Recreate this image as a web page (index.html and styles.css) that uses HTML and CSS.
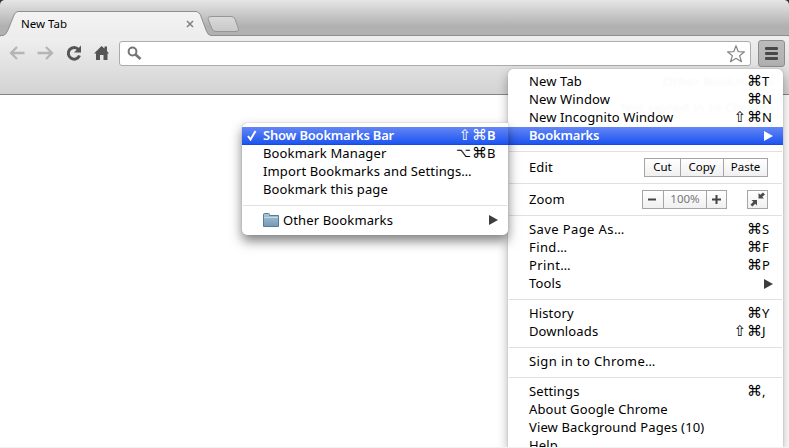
FILE: index.html
```html
<!DOCTYPE html>
<html lang="en">
<head>
<meta charset="utf-8">
<title>New Tab</title>
<link rel="stylesheet" href="styles.css">
</head>
<body>
<div class="window">
  <header class="chrome">
    <div class="tabstrip">
      <svg class="tabshape" width="789" height="38" viewBox="0 0 789 38">
        <defs><linearGradient id="tab" x1="0" y1="0" x2="0" y2="1"><stop offset="0" stop-color="#f3f3f3"/><stop offset="1" stop-color="#ededed"/></linearGradient>
        <linearGradient id="add" x1="0" y1="0" x2="0" y2="1"><stop offset="0" stop-color="#dadada"/><stop offset="1" stop-color="#c8c8c8"/></linearGradient></defs>
        <path d="M0 0h4Q0 1 0 5zM789 0h-4q4 1 4 5z" fill="#333"/>
        <path d="M0 36.5V35.500H3Q6 35 8 30L14 15Q15.500 11.500 18 11.500H196Q199 11.500 200.500 15L206 30Q208 35.500 211 35.500H789V38H0z" fill="url(#tab)" stroke="#8e8e8e"/>
        <path d="M0 36.500h789V38H0z" fill="#ededed"/>
        <path d="M211 16.500H231Q234 16.500 235 19L238.500 29Q239 31.500 236 31.500H216Q213 31.500 212 29L208 19Q207.500 16.500 211 16.500z" fill="url(#add)" stroke="#969696"/>
      </svg>
      <span class="title">New Tab</span>
      <svg class="close" width="8" height="8" viewBox="0 0 8 8"><path d="M1 1l6 6M7 1L1 7" stroke="#818181" stroke-width="1.500"/></svg>
    </div>
    <div class="toolbar">
      <svg class="nav" width="112" height="20" viewBox="0 0 112 20">
        <g fill="none" stroke="#b5b5b5" stroke-width="2.300"><path d="M24.500 10H11.500M17 4l-6 6 6 6"/><path d="M37.500 10H51M46 4l6 6-6 6"/></g>
        <path d="M78.500 6.500A5.800 5.800 0 1 0 79.500 12.500" fill="none" stroke="#555" stroke-width="3"/><path d="M81 2.500v7h-7z" fill="#555"/>
        <path d="M101.500 3L94 10.500h2V17h4v-5h3.500v5h4v-6.500h1.500L107 8V3.500h-2.500v2z" fill="#555"/>
      </svg>
      <div class="omnibox">
        <svg width="15" height="15" viewBox="0 0 15 15"><circle cx="5.500" cy="5.500" r="3.900" fill="none" stroke="#757575" stroke-width="2"/><path d="M8.500 8.500l5 4.500" stroke="#757575" stroke-width="2.600"/></svg>
        <svg width="20" height="20" viewBox="0 0 20 20"><path d="M10 1.700l2.300 6 6.200.1-4.900 4 1.900 6L10 14.300l-5.500 3.500 1.900-6-4.900-4 6.200-.1z" fill="#fff" stroke="#858585" stroke-width="1.200" stroke-linejoin="round"/></svg>
      </div>
      <div class="menubutton"><i></i><i></i><i></i></div>
    </div>
  </header>
  <main class="page"></main>
</div>

<nav class="menu main">
  <div class="ghost"><p>Other Bookmarks</p><p>Not signed in to Chrome</p></div>
  <div class="row"><span>New Tab</span><kbd><b>⌘</b><em>T</em></kbd></div>
  <div class="row"><span>New Window</span><kbd><b>⌘</b><em>N</em></kbd></div>
  <div class="row"><span>New Incognito Window</span><kbd><b>⇧</b><b>⌘</b><em>N</em></kbd></div>
  <div class="row selected"><span>Bookmarks</span><svg class="arrow" width="9" height="10"><path d="M0 0v10L9 5z"/></svg></div>
  <hr>
  <div class="row tall"><span>Edit</span><div class="group edit"><button>Cut</button><button>Copy</button><button>Paste</button></div></div>
  <hr>
  <div class="row tall"><span>Zoom</span>
    <div class="group zoom"><button><svg width="9" height="9"><path d="M0 4.500h8" stroke="#444" stroke-width="2"/></svg></button><button class="level">100%</button><button><svg width="9" height="9"><path d="M0 4.500h9M4.500 0v9" stroke="#444" stroke-width="2"/></svg></button></div>
    <div class="group full"><button><svg width="15" height="15" viewBox="0 0 15 15"><path d="M1.500 8H7v5.500L5.300 11.800 2.300 14.500.5 12.700l2.800-3zM8.500 1v5.500H14l-1.700-1.700L15 2.500 13 .4l-2.700 2.400z" fill="#4c4c4c"/></svg></button></div>
  </div>
  <hr>
  <div class="row"><span class="dots">Save Page As…</span><kbd><b>⌘</b><em>S</em></kbd></div>
  <div class="row"><span class="dots">Find…</span><kbd><b>⌘</b><em>F</em></kbd></div>
  <div class="row"><span class="dots">Print…</span><kbd><b>⌘</b><em>P</em></kbd></div>
  <div class="row"><span>Tools</span><svg class="arrow" width="9" height="10"><path d="M0 0v10L9 5z"/></svg></div>
  <hr>
  <div class="row"><span>History</span><kbd><b>⌘</b><em>Y</em></kbd></div>
  <div class="row"><span>Downloads</span><kbd><b>⇧</b><b>⌘</b><em>J</em></kbd></div>
  <hr>
  <div class="row"><span class="dots">Sign in to Chrome…</span></div>
  <hr>
  <div class="row"><span>Settings</span><kbd><b>⌘</b><em>,</em></kbd></div>
  <div class="row"><span>About Google Chrome</span></div>
  <div class="row"><span>View Background Pages (10)</span></div>
  <div class="row"><span>Help</span></div>
</nav>

<nav class="menu sub">
  <div class="row selected"><svg class="check" width="10" height="11" viewBox="0 0 10 11"><path d="M1 6l2.500 3.500L8.500 1" fill="none" stroke="#fff" stroke-width="2"/></svg><span>Show Bookmarks Bar</span><kbd><b>⇧</b><b>⌘</b><em>B</em></kbd></div>
  <div class="row"><span>Bookmark Manager</span><kbd><b class="option">⌥</b><b>⌘</b><em>B</em></kbd></div>
  <div class="row"><span>Import Bookmarks and Settings…</span></div>
  <div class="row"><span>Bookmark this page</span></div>
  <hr>
  <div class="row other"><svg class="folder" width="16" height="14" viewBox="0 0 16 14"><defs><linearGradient id="fold" x1="0" y1="0" x2="0" y2="1"><stop offset="0" stop-color="#a9c5d9"/><stop offset="1" stop-color="#7599b5"/></linearGradient></defs><path d="M.5 13.500V1.500q0-1 1-1h4q1 0 1 1V2.500h9v11z" fill="url(#fold)" stroke="#587b96"/><path d="M1 4.500h14" stroke="#c4d8e5"/></svg><span>Other Bookmarks</span><svg class="arrow" width="9" height="10"><path d="M0 0v10L9 5z"/></svg></div>
</nav>
</body>
</html>
```
FILE: styles.css
```css
* { box-sizing: border-box; }
html, body { margin: 0; width: 789px; height: 448px; overflow: hidden; }
body { position: relative; font: 13px/18px "Noto Sans", sans-serif; color: #000; background: #fff; }
.window { display: flex; flex-direction: column; height: 448px; }
.chrome { height: 95px; border-bottom: 1px solid #858585; background: linear-gradient(#efefef 38px, #d3d3d3); }
.tabstrip { position: relative; height: 38px; display: flex; align-items: center; padding: 11px 0 0 21px; background: linear-gradient(#e6e6e6, #b1b1b1 26px, #b1b1b1); }
.tabshape { position: absolute; inset: 0; }
.title { position: relative; width: 165px; font-size: 11.5px; line-height: 24px; height: 26px; }
.close { position: relative; margin-bottom: 1px; }
.toolbar { display: flex; height: 56px; align-items: flex-start; padding: 1px 4px 0 0; }
.nav { margin: 4px 7px 0 0; }
.omnibox { flex: none; width: 632px; height: 25px; margin-top: 2px; border: 1px solid #acacac; border-radius: 3px; background: #fff; display: flex; align-items: center; justify-content: space-between; padding: 0 4px 0 7px; }
.menubutton { width: 27px; height: 27px; margin-left: 7px; margin-top: 1px; border: 1px solid #8c8c8c; border-radius: 3px; background: linear-gradient(#bbb, #b0b0b0); display: flex; flex-direction: column; align-items: center; justify-content: center; gap: 2px; }
.menubutton i { width: 13px; height: 3px; border-radius: 1px; background: #484848; }
.page { flex: 1; border-bottom: 1px solid #f2f2f2; }

.menu { position: absolute; background: #fff; padding-top: 4px; overflow: hidden; }
.main { left: 508px; top: 69px; width: 275px; height: 378px; border-radius: 5px 5px 0 0; box-shadow: 0 0 1px #777, 0 5px 11px rgba(0,0,0,.32); clip-path: inset(-12px -12px 0 -12px); }
.sub { left: 242px; top: 123px; width: 266px; height: 112px; border-radius: 5px 0 5px 5px; box-shadow: 0 0 1px #888, 0 6px 12px rgba(0,0,0,.5); }
.ghost { position: absolute; top: 3px; right: 8px; text-align: right; font-weight: 600; opacity: .025; filter: blur(.8px); }
.ghost p { margin: 0 0 8px; }
.row { position: relative; height: 18px; padding-left: 21px; display: flex; align-items: center; white-space: pre; line-height: 18px; letter-spacing: .13px; }
.row > span { height: 20px; }
.row > .dots { letter-spacing: .4px; }
.tall > span, .other > span { height: 18px; }
.tall { height: 20px; }
.selected { color: #fff; background: linear-gradient(#6486f5, #1c55f0 17px, #1a4be0 17px); }
.selected > span { font-weight: 600; letter-spacing: -.2px; }
.menu hr { border: 0; height: 12px; margin: 0 1px; background: linear-gradient(#e0e0e0, #e0e0e0) 0 6px / 100% 1px no-repeat; }
kbd { margin-left: auto; display: flex; height: 20px; font: inherit; letter-spacing: 0; }
kbd b { width: 14px; font: 15px/18px "DejaVu Sans", sans-serif; text-align: center; }
kbd .option { width: 16px; font-size: 13px; padding-right: 2px; }
kbd em { width: 22px; font-style: normal; padding-left: 1px; }
.selected kbd { font-weight: 600; }
.arrow { margin: 0 10px 0 auto; fill: #3d3d3d; }
.selected .arrow { fill: #fff; }
.check { position: absolute; left: 5px; top: 3px; }
.folder { margin-right: 4px; }
.group { display: flex; height: 19px; border: 1px solid #a5a5a5; }
.group button { border: 0; border-left: 1px solid #a5a5a5; padding: 0; background: linear-gradient(#fff, #f0f0f0); font: 11.5px/16px "Noto Sans", sans-serif; color: #000; display: flex; align-items: center; justify-content: center; }
.group button:first-child { border-left: 0; }
.edit { margin: 0 15px 0 auto; width: 124px; }
.edit button { width: 35px; }
.edit button:nth-child(2) { width: 43px; }
.edit button:nth-child(3) { width: 44px; }
.zoom { margin-left: auto; width: 85px; }
.zoom button { width: 20px; }
.zoom .level { width: 44px; color: #777; }
.full { margin: 0 15px 0 20px; width: 21px; }
.full button { width: 19px; }
```
